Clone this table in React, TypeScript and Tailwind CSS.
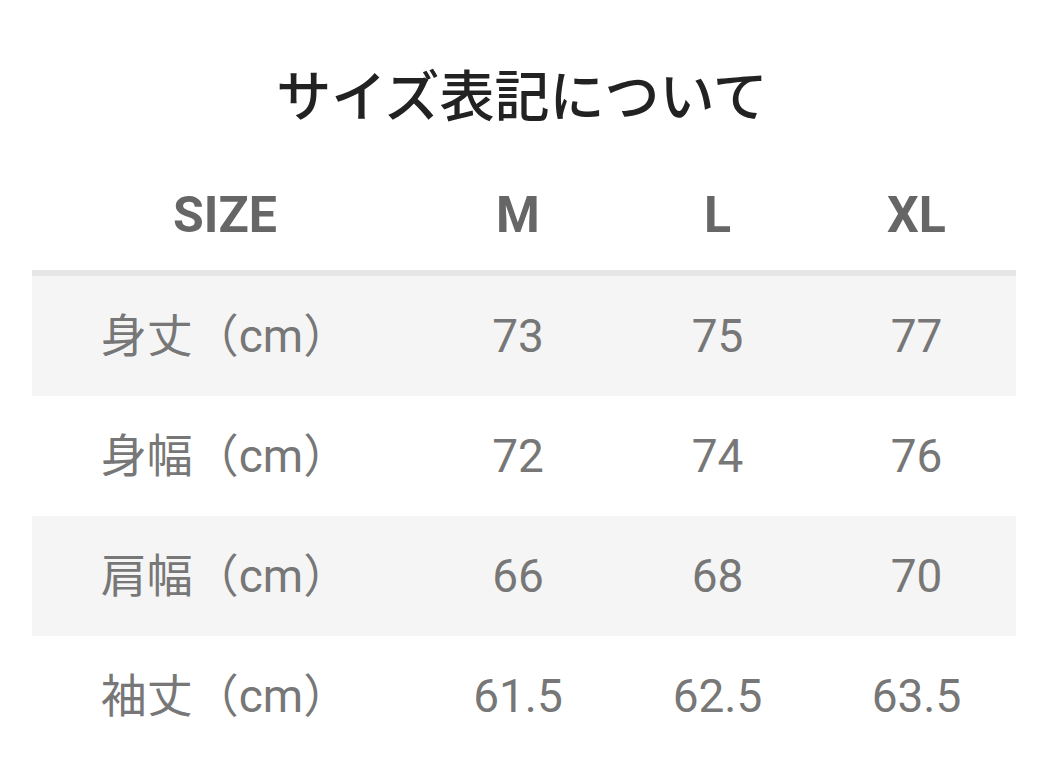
const headers = ["SIZE", "M", "L", "XL"];

const rows = [
  { label: "身丈（cm）", values: ["73", "75", "77"] },
  { label: "身幅（cm）", values: ["72", "74", "76"] },
  { label: "肩幅（cm）", values: ["66", "68", "70"] },
  { label: "袖丈（cm）", values: ["61.5", "62.5", "63.5"] },
];

const gridCols = "grid grid-cols-[386px_200px_199px_199px]";

const App = () => {
  return (
    <div className="w-[1044px] h-[764px] bg-white overflow-hidden font-['Roboto','Noto_Sans_CJK_JP',sans-serif]">
      <div className="h-[160px] pt-[24px] flex items-center justify-center">
        <h1 className="text-[55px] leading-none font-medium text-[#222] font-['Noto_Sans_CJK_JP',sans-serif]">
          サイズ表記について
        </h1>
      </div>

      <div className="ml-[32px] mr-[28px]">
        <div className={`${gridCols} h-[110px] items-center`}>
          {headers.map((h) => (
            <div key={h} className="text-center text-[50px] leading-none font-bold text-[#666]">
              {h}
            </div>
          ))}
        </div>
        <div className="h-[6px] bg-[#e6e6e6]" />

        {rows.map((row, i) => (
          <div
            key={row.label}
            className={`${gridCols} h-[120px] items-center ${i % 2 === 0 ? "bg-[#f5f5f5]" : "bg-white"}`}
          >
            <div className="text-center text-[46px] leading-none text-[#777]">{row.label}</div>
            {row.values.map((v) => (
              <div key={v} className="text-center text-[46px] leading-none text-[#777]">
                {v}
              </div>
            ))}
          </div>
        ))}
      </div>
    </div>
  );
};

export default App;
